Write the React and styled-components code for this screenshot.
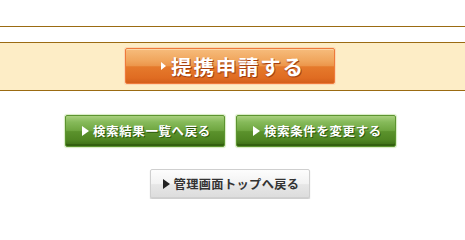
import React from "react";
import styled, { createGlobalStyle, css } from "styled-components";

const Global = createGlobalStyle`
  html, body { margin: 0; padding: 0; background: #fff; }
  body { font-family: "Noto Sans CJK JP", "Noto Sans", sans-serif; }
`;

const Page = styled.div`
  width: 465px;
  padding-top: 26px;
`;

const Rule = styled.div`
  border-top: 1px solid #9b6b12;
  height: 15px;
`;

const Band = styled.div`
  background: #fdedc6;
  border-top: 1px solid #9b6b12;
  border-bottom: 1px solid #9b6b12;
  display: flex;
  justify-content: center;
  align-items: flex-start;
  padding-right: 5px;
  box-sizing: border-box;
  padding-top: 5px;
  height: 49px;
`;

const Arrow = styled.span`
  display: inline-block;
  width: 0;
  height: 0;
  border-style: solid;
  border-width: ${(p) => p.$h / 2}px 0 ${(p) => p.$h / 2}px ${(p) => p.$w}px;
  border-color: transparent transparent transparent ${(p) => p.$c};
  margin-right: ${(p) => p.$gap}px;
  flex: none;
`;

const BtnBase = css`
  box-sizing: border-box;
  display: flex;
  align-items: center;
  justify-content: center;
  font-weight: 700;
  white-space: nowrap;
  border-radius: 2px;
  cursor: pointer;
`;

const OrangeBtn = styled.div`
  ${BtnBase}
  width: 210px;
  height: 36px;
  border: 1px solid #ee7a3a;
  background: linear-gradient(
    to bottom,
    #f6bc7c 0%,
    #f0a55c 35%,
    #ec954a 50%,
    #e57a2c 52%,
    #e06c22 85%,
    #d35e1a 100%
  );
  box-shadow: 0 0 0 1px #fbd7b2, inset 0 1px 0 #fbd6a6;
  color: #fff;
  font-size: 20.5px;
  letter-spacing: 1.8px;
  text-shadow: 1px 1px 0 #a8400e, 0 1px 1px #b24a14;
  padding-left: 6px;
`;

const Row = styled.div`
  display: flex;
  justify-content: center;
  gap: 11px;
  padding-right: 5px;
  margin-top: ${(p) => p.$top}px;
`;

const GreenBtn = styled.div`
  ${BtnBase}
  width: 160px;
  height: 32px;
  border: 1px solid #5c9430;
  background: linear-gradient(
    to bottom,
    #a9d07e 0%,
    #86ba5a 20%,
    #6fa640 48%,
    #5b922c 52%,
    #4f8522 80%,
    #3b6c14 100%
  );
  box-shadow: 0 0 1px 1px #d8ecc4, inset 0 -2px 0 #33600f;
  color: #fff;
  font-size: 12.4px;
  letter-spacing: 0.7px;
  text-shadow: 1px 1px 0 #2d5a0c;
  padding-left: 4px;
`;

const GrayBtn = styled.div`
  ${BtnBase}
  width: 160px;
  height: 30px;
  border: 1px solid #cfcfcf;
  background: linear-gradient(to bottom, #fdfdfd 0%, #f2f2f2 50%, #e7e7e7 52%, #dcdcdc 100%);
  box-shadow: 0 1px 1px #c4c4c4, inset 0 -1px 0 #d0d0d0;
  color: #333;
  font-size: 12.2px;
  letter-spacing: 0.4px;
  padding-left: 2px;
`;

export default function App() {
  return (
    <>
      <Global />
      <Page>
        <Rule />
        <Band>
          <OrangeBtn>
            <Arrow $w={5} $h={9} $c="#fff" $gap={5} />
            提携申請する
          </OrangeBtn>
        </Band>
        <Row $top={24}>
          <GreenBtn>
            <Arrow $w={7} $h={10} $c="#fff" $gap={4} />
            検索結果一覧へ戻る
          </GreenBtn>
          <GreenBtn>
            <Arrow $w={7} $h={10} $c="#fff" $gap={4} />
            検索条件を変更する
          </GreenBtn>
        </Row>
        <Row $top={22}>
          <GrayBtn>
            <Arrow $w={7} $h={10} $c="#222" $gap={4} />
            管理画面トップへ戻る
          </GrayBtn>
        </Row>
      </Page>
    </>
  );
}
